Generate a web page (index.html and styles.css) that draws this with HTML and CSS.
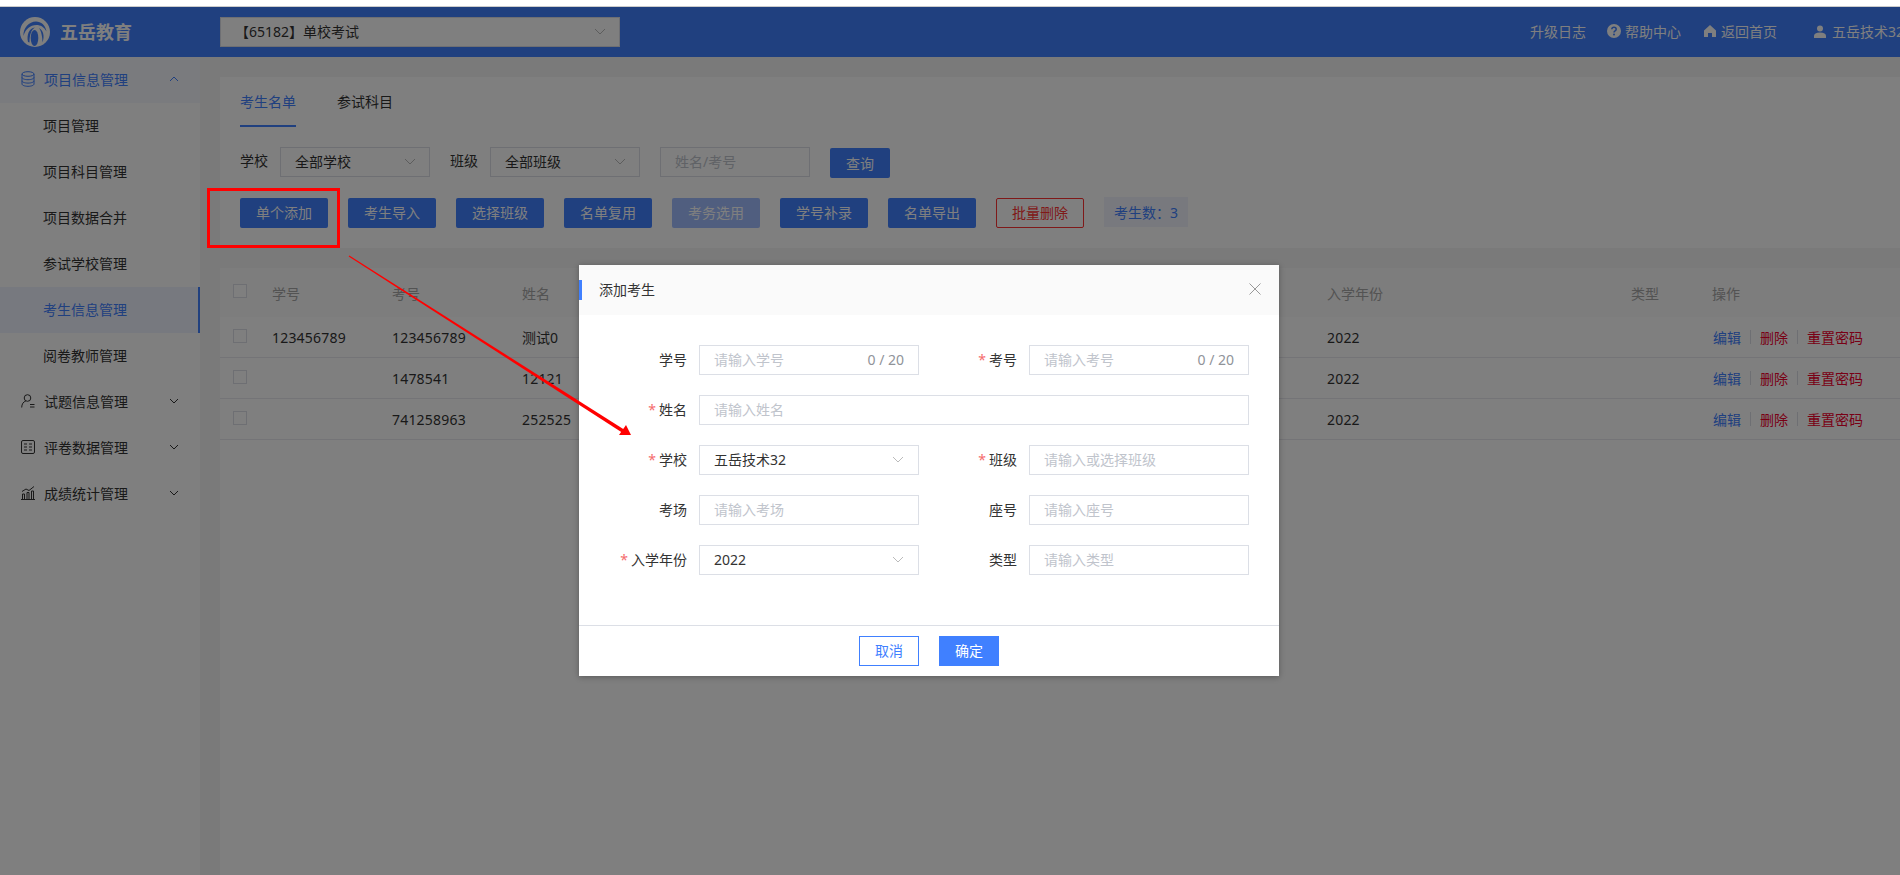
FILE: index.html
```html
<!DOCTYPE html>
<html lang="zh-CN">
<head>
<meta charset="utf-8">
<title>考生信息管理</title>
<link rel="stylesheet" href="styles.css">
</head>
<body>
<div class="strip"></div>
<div class="app">
  <header class="topbar">
    <div class="logo">
      <svg class="logo-mark" viewBox="0 0 30 30"><circle cx="15" cy="15" r="15" fill="#fff"/><path d="M3.500 19C3 11 9 4.500 16 4.500c5 0 9.500 3.500 10.500 10-2.500-4.500-6-6.500-10-6.500C10 8 5.500 12 3.500 19z" fill="#4080ff"/><path d="M8 25C6.500 18 9 11 15 10.500c-4 2-5.500 8-5.500 15z" fill="#4080ff"/><path d="M19 11c4 2 6 8 3.500 14.500 0-5-1-11-3.500-14.500z" fill="#4080ff"/><ellipse cx="14.500" cy="21" rx="3.800" ry="8" fill="#4080ff"/></svg>
      <span class="logo-text">五岳教育</span>
    </div>
    <div class="project-select"><span>【65182】单校考试</span><svg class="chev" viewBox="0 0 12 7"><path d="M1 1l5 5 5-5"/></svg></div>
    <nav class="topnav">
      <span class="nav-item first">升级日志</span>
      <span class="nav-item help"><svg class="nav-ico" viewBox="0 0 14 14"><circle cx="7" cy="7" r="7" fill="#fff"/><path d="M4.800 5.300C4.900 4 5.800 3.300 7 3.300s2.200.8 2.200 1.900c0 1.700-2.200 1.500-2.200 3.200" fill="none" stroke="#4080ff" stroke-width="1.500"/><circle cx="7" cy="10.500" r="1" fill="#4080ff"/></svg>帮助中心</span>
      <span class="nav-item home"><svg class="nav-ico" viewBox="0 0 14 14"><path d="M7 1L1 6.500V13h4V9h4v4h4V6.500z" fill="#fff"/></svg>返回首页</span>
      <span class="nav-item user"><svg class="nav-ico small" viewBox="0 0 12 13"><circle cx="6" cy="3.500" r="3" fill="#fff"/><path d="M0 13v-2c0-2 2-3.500 6-3.500s6 1.500 6 3.500v2z" fill="#fff"/></svg>五岳技术32</span>
    </nav>
  </header>
  <div class="body">
    <aside class="sidebar">
      <div class="side-row parent open">
        <svg class="side-ico" viewBox="0 0 14 16"><ellipse cx="7" cy="3" rx="6" ry="2.300"/><path d="M1 3v10c0 1.300 2.700 2.300 6 2.300s6-1 6-2.300V3M1 6.400c0 1.300 2.700 2.300 6 2.300s6-1 6-2.300M1 9.800c0 1.300 2.700 2.300 6 2.300s6-1 6-2.300"/></svg>
        <span class="side-text">项目信息管理</span>
        <svg class="side-chev" viewBox="0 0 10 6"><path d="M1 5l4-4 4 4"/></svg>
      </div>
      <div class="side-row child">项目管理</div>
      <div class="side-row child">项目科目管理</div>
      <div class="side-row child">项目数据合并</div>
      <div class="side-row child">参试学校管理</div>
      <div class="side-row child active">考生信息管理</div>
      <div class="side-row child">阅卷教师管理</div>
      <div class="side-row parent">
        <svg class="side-ico" viewBox="0 0 14 14"><circle cx="6.500" cy="4" r="3.300"/><path d="M.7 13.500c0-3.500 1.800-6 4-6.300M9 10.500h4.500M9 13h4.500"/></svg>
        <span class="side-text">试题信息管理</span>
        <svg class="side-chev" viewBox="0 0 10 6"><path d="M1 1l4 4 4-4"/></svg>
      </div>
      <div class="side-row parent">
        <svg class="side-ico" viewBox="0 0 14 14"><rect x=".5" y=".5" width="13" height="13" rx="1.500"/><path d="M3 4h3M8 4h3M3 7h3M8 7h3M3 10h3M8 10h3"/></svg>
        <span class="side-text">评卷数据管理</span>
        <svg class="side-chev" viewBox="0 0 10 6"><path d="M1 1l4 4 4-4"/></svg>
      </div>
      <div class="side-row parent">
        <svg class="side-ico" viewBox="0 0 14 14"><path d="M0 13.500h14M1.500 13.500V8h2v5.500M6 13.500V6.500h2v7M10.500 13.500V5h2v8.500M1 5.500L5 3l3 1.500L13 .5"/></svg>
        <span class="side-text">成绩统计管理</span>
        <svg class="side-chev" viewBox="0 0 10 6"><path d="M1 1l4 4 4-4"/></svg>
      </div>
    </aside>
    <main class="main">
      <section class="card filters">
        <div class="tabs">
          <span class="tab active">考生名单</span>
          <span class="tab">参试科目</span>
        </div>
        <div class="filter-row">
          <span class="filter-label">学校</span>
          <div class="pick"><span>全部学校</span><svg class="chev" viewBox="0 0 12 7"><path d="M1 1l5 5 5-5"/></svg></div>
          <span class="filter-label">班级</span>
          <div class="pick"><span>全部班级</span><svg class="chev" viewBox="0 0 12 7"><path d="M1 1l5 5 5-5"/></svg></div>
          <div class="pick search">姓名/考号</div>
          <button class="btn query">查询</button>
        </div>
        <div class="action-row">
          <button class="btn">单个添加</button>
          <button class="btn">考生导入</button>
          <button class="btn">选择班级</button>
          <button class="btn">名单复用</button>
          <button class="btn disabled">考务选用</button>
          <button class="btn">学号补录</button>
          <button class="btn">名单导出</button>
          <button class="btn danger">批量删除</button>
          <span class="count">考生数：3</span>
        </div>
      </section>
      <section class="card table">
        <div class="row head">
          <span class="check"></span><span>学号</span><span>考号</span><span>姓名</span><span>入学年份</span><span>类型</span><span>操作</span>
        </div>
        <div class="row">
          <span class="check"></span><span class="num">123456789</span><span class="num">123456789</span><span>测试0</span><span class="num">2022</span><span></span>
          <span class="ops"><a class="op-edit">编辑</a><i></i><a class="op-del">删除</a><i></i><a class="op-del">重置密码</a></span>
        </div>
        <div class="row">
          <span class="check"></span><span></span><span class="num">1478541</span><span class="num">12121</span><span class="num">2022</span><span></span>
          <span class="ops"><a class="op-edit">编辑</a><i></i><a class="op-del">删除</a><i></i><a class="op-del">重置密码</a></span>
        </div>
        <div class="row">
          <span class="check"></span><span></span><span class="num">741258963</span><span class="num">252525</span><span class="num">2022</span><span></span>
          <span class="ops"><a class="op-edit">编辑</a><i></i><a class="op-del">删除</a><i></i><a class="op-del">重置密码</a></span>
        </div>
      </section>
    </main>
  </div>
  <div class="overlay"></div>
  <div class="dialog">
    <div class="dialog-head">
      <span class="dialog-title">添加考生</span>
      <svg class="dialog-close" viewBox="0 0 12 12"><path d="M.5.5l11 11M11.500.5l-11 11"/></svg>
    </div>
    <div class="form">
      <div class="form-row">
        <div class="field"><label class="field-label">学号</label><div class="input ph"><span>请输入学号</span><em>0 / 20</em></div></div>
        <div class="field"><label class="field-label req">考号</label><div class="input ph"><span>请输入考号</span><em>0 / 20</em></div></div>
      </div>
      <div class="form-row">
        <div class="field"><label class="field-label req">姓名</label><div class="input ph wide"><span>请输入姓名</span></div></div>
      </div>
      <div class="form-row">
        <div class="field"><label class="field-label req">学校</label><div class="input"><span>五岳技术32</span><svg class="chev" viewBox="0 0 12 7"><path d="M1 1l5 5 5-5"/></svg></div></div>
        <div class="field"><label class="field-label req">班级</label><div class="input ph"><span>请输入或选择班级</span></div></div>
      </div>
      <div class="form-row">
        <div class="field"><label class="field-label">考场</label><div class="input ph"><span>请输入考场</span></div></div>
        <div class="field"><label class="field-label">座号</label><div class="input ph"><span>请输入座号</span></div></div>
      </div>
      <div class="form-row">
        <div class="field"><label class="field-label req">入学年份</label><div class="input"><span>2022</span><svg class="chev" viewBox="0 0 12 7"><path d="M1 1l5 5 5-5"/></svg></div></div>
        <div class="field"><label class="field-label">类型</label><div class="input ph"><span>请输入类型</span></div></div>
      </div>
    </div>
    <div class="dialog-foot">
      <button class="dbtn ghost">取消</button>
      <button class="dbtn solid">确定</button>
    </div>
  </div>
  <div class="mark-box"></div>
</div>
<svg class="arrow" viewBox="0 0 1900 875"><polygon points="349.300,255.600 624,429.500 622,432.500 348.700,256.400" fill="#f00"/><polygon points="631,435 619,435 626,425" fill="#f00"/></svg>
</body>
</html>
```
FILE: styles.css
```css
* { box-sizing: border-box; }
html, body { margin: 0; height: 100%; overflow: hidden; background: #fff; }
body {
  position: relative;
  font-family: "Noto Sans", "Noto Sans CJK SC", sans-serif;
  font-size: 14px;
  color: #333;
  width: 1900px;
  height: 875px;
}
.strip { height: 7px; background: #fff; border-bottom: 1px solid #ccc; }
.app { position: relative; height: 868px; display: flex; flex-direction: column; overflow: hidden; }

/* top bar */
.topbar { flex: none; height: 50px; background: #4080ff; display: flex; align-items: center; color: #fff; }
.logo { width: 220px; padding-left: 20px; display: flex; align-items: center; gap: 10px; }
.logo-mark { width: 30px; height: 30px; flex: none; }
.logo-text { font-size: 18px; font-weight: 700; line-height: 1; }
.project-select {
  width: 400px; height: 30px; background: #fff; border: 1px solid #dcdfe6; color: #333;
  display: flex; align-items: center; justify-content: space-between; padding: 0 13px 2px 14px;
}
.chev { width: 12px; height: 7px; flex: none; fill: none; stroke: #bbb; stroke-width: 1; }
.topnav { flex: 1; display: flex; align-items: center; min-width: 0; padding-bottom: 2px; }
.nav-item { display: flex; align-items: center; white-space: nowrap; }
.nav-item.first { margin-left: 910px; }
.nav-item.help { margin-left: 21px; }
.nav-item.home { margin-left: 22px; }
.nav-item.user { margin-left: 37px; }
.nav-ico { width: 14px; height: 14px; margin-right: 4px; flex: none; }
.nav-ico.small { width: 12px; height: 13px; margin-right: 6px; }
.home .nav-ico { margin-right: 4px; }

/* sidebar */
.body { flex: 1; display: flex; min-height: 0; background: #f5f5f5; }
.sidebar { width: 200px; flex: none; background: #fff; }
.side-row { height: 46px; display: flex; align-items: center; padding-bottom: 2px; }
.side-row.child { padding-left: 43px; }
.side-row.parent { padding-left: 21px; }
.side-row.open { background: #f4f6fd; }
.side-row.open .side-text { color: #4080ff; }
.side-row.open .side-ico { stroke: #4080ff; }
.side-row.open .side-chev { stroke: #4080ff; }
.side-row.active { background: #eff3ff; color: #4080ff; border-right: 2px solid #4080ff; }
.side-ico { width: 14px; height: 16px; flex: none; margin-right: 9px; fill: none; stroke: #333; stroke-width: 1; }
.side-text { flex: none; }
.side-chev { width: 10px; height: 6px; margin-left: 41px; flex: none; fill: none; stroke: #333; stroke-width: 1; }

/* main */
.main { flex: 1; min-width: 0; padding: 20px 0 0 20px; display: flex; flex-direction: column; gap: 20px; }
.card { background: #fff; }
.filters { padding: 0 20px 20px; flex: none; }
.tabs { display: flex; gap: 41px; height: 50px; }
.tab { height: 50px; line-height: 50px; width: 56px; white-space: nowrap; }
.tab.active { color: #4080ff; border-bottom: 2px solid #4080ff; }
.filter-row { margin-top: 20px; display: flex; align-items: flex-start; height: 30px; }
.filter-label { width: 40px; line-height: 28px; }
.pick {
  width: 150px; height: 30px; margin-right: 20px; border: 1px solid #dcdfe6; padding: 0 13px 2px 14px;
  display: flex; align-items: center; justify-content: space-between;
}
.pick.search { color: #c0c4cc; }
.btn {
  width: 88px; height: 30px; padding: 0; border: 0; border-radius: 2px; background: #4080ff; color: #fff;
  font: inherit; margin-right: 20px;
}
.btn.query { width: 60px; margin-top: 1px; }
.action-row { margin-top: 21px; display: flex; height: 30px; }
.action-row .btn { padding-bottom: 2px; }
.btn.disabled { background: #a0bdff; }
.btn.danger { background: #fff; border: 1px solid #f33; color: #f33; }
.count {
  width: 84px; height: 30px; margin-top: -1px; background: #f0f3fc; color: #4080ff;
  display: flex; align-items: center; justify-content: center;
}

/* table */
.table { flex: 1; }
.row {
  display: grid; grid-template-columns: 52px 120px 130px 805px 304px 81px 1fr;
  height: 41px; border-bottom: 1px solid #e8e8ef; align-items: center; color: #333;
}
.row.head { height: 49px; border-bottom: 0; background: #fafafa; color: #a6a6a6; }
.num { letter-spacing: .2px; }
.check { width: 14px; height: 14px; margin: 0 0 3px 13px; border: 1px solid #dcdfe6; background: #fff; }
.ops { display: flex; align-items: center; padding-left: 1px; }
.ops i { width: 1px; height: 14px; margin: 0 9px; background: #dcdfe6; }
.op-edit { color: #4080ff; }
.op-del { color: #f3002c; }

/* overlay layers */
.overlay { position: absolute; inset: 0; background: rgba(0, 0, 0, .5); }
.dialog {
  position: absolute; left: 579px; top: 258px; width: 700px; height: 411px;
  background: #fff; box-shadow: 0 1px 6px rgba(0, 0, 0, .3); display: flex; flex-direction: column;
}
.dialog-head {
  height: 50px; flex: none; background: #fafafa; display: flex; align-items: center; justify-content: space-between;
  padding: 0 18px 2px 20px; position: relative;
}
.dialog-head::before { content: ""; position: absolute; left: 0; top: 15px; width: 3px; height: 20px; background: #4080ff; }
.dialog-title { color: #333; }
.dialog-close { width: 12px; height: 12px; fill: none; stroke: #999; stroke-width: 1; }
.form { flex: 1; padding: 30px 0 0 28px; display: flex; flex-direction: column; gap: 20px; }
.form-row { display: flex; gap: 18px; height: 30px; }
.field { display: flex; align-items: center; }
.field-label { width: 80px; margin-right: 12px; padding-bottom: 2px; text-align: right; color: #333; }
.field-label.req::before { content: "*"; color: #f56c6c; margin-right: 3px; }
.input {
  width: 220px; height: 30px; border: 1px solid #dcdfe6; padding: 0 14px 2px 14px; background: #fff; color: #333;
  display: flex; align-items: center; justify-content: space-between;
}
.input.ph span { color: #c0c4cc; }
.input em { font-style: normal; color: #909399; font-size: 14px; }
.input.wide { width: 550px; }
.dialog-foot {
  height: 51px; flex: none; border-top: 1px solid #dcdfe6; display: flex; align-items: center; justify-content: center; gap: 20px; padding-bottom: 1px;
}
.dbtn { width: 60px; height: 30px; padding: 0 0 2px; font: inherit; border: 1px solid #4080ff; }
.dbtn.ghost { background: #fff; color: #4080ff; }
.dbtn.solid { background: #4080ff; color: #fff; }
.mark-box { position: absolute; left: 207px; top: 181px; width: 133px; height: 60px; border: 3px solid #f00; }
.arrow { position: absolute; left: 0; top: 0; width: 1900px; height: 875px; pointer-events: none; }
```
